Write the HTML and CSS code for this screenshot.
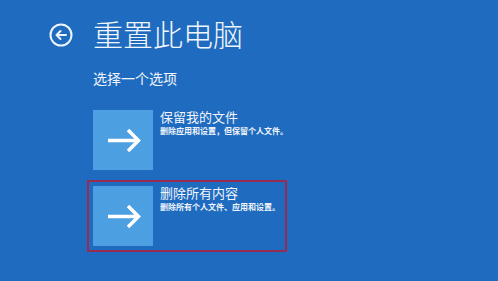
FILE: index.html
```html
<!DOCTYPE html>
<html lang="zh">
<head>
<meta charset="utf-8">
<link rel="stylesheet" href="styles.css">
</head>
<body>
<div class="page">
  <div class="header">
    <svg class="back" width="24" height="24" viewBox="0 0 24 24">
      <circle cx="12" cy="12" r="10.5" fill="none" stroke="#eef4fb" stroke-width="2"/>
      <path d="M17 12H7.5M11.5 8L7.5 12L11.5 16" fill="none" stroke="#eef4fb" stroke-width="2" stroke-linecap="round" stroke-linejoin="round"/>
    </svg>
    <h1 class="title">重置此电脑</h1>
  </div>
  <div class="content">
    <p class="prompt">选择一个选项</p>
    <div class="options">
      <div class="option">
        <div class="tile">
          <svg width="60" height="60" viewBox="0 0 60 60">
            <path d="M15 30.5H45M35 20L45.5 30.5L35 41" fill="none" stroke="#ffffff" stroke-width="3.5" stroke-linejoin="miter"/>
          </svg>
        </div>
        <div class="text">
          <div class="opt-title">保留我的文件</div>
          <div class="opt-desc">删除应用和设置，但保留个人文件。</div>
        </div>
      </div>
      <div class="option selected">
        <div class="tile">
          <svg width="60" height="60" viewBox="0 0 60 60">
            <path d="M15 30.5H45M35 20L45.5 30.5L35 41" fill="none" stroke="#ffffff" stroke-width="3.5" stroke-linejoin="miter"/>
          </svg>
        </div>
        <div class="text">
          <div class="opt-title">删除所有内容</div>
          <div class="opt-desc">删除所有个人文件、应用和设置。</div>
        </div>
      </div>
    </div>
  </div>
</div>
</body>
</html>
```
FILE: styles.css
```css
html, body {
  margin: 0;
  padding: 0;
  width: 498px;
  height: 281px;
  overflow: hidden;
  background: #1f6bbf;
  font-family: "Noto Sans CJK SC", "Noto Sans", sans-serif;
  color: #f2f6fb;
}
.page {
  padding: 15px 0 0 49px;
}
.header {
  display: flex;
  align-items: center;
  gap: 20px;
}
.back {
  display: block;
  flex: none;
  margin-top: 3px;
}
.title {
  margin: 0;
  font-size: 30px;
  font-weight: 300;
  line-height: 36px;
  letter-spacing: 0;
}
.content {
  padding-left: 38px;
}
.prompt {
  margin: 18px 0 0 6px;
  font-size: 14px;
  line-height: 18px;
  font-weight: 400;
}
.options {
  display: flex;
  flex-direction: column;
  gap: 4px;
  margin-top: 17px;
}
.option {
  display: flex;
  align-items: flex-start;
  gap: 7px;
  width: 188px;
  padding: 4px;
  border: 2px solid transparent;
}
.option.selected {
  border-color: #962c50;
}
.tile {
  width: 60px;
  height: 60px;
  flex: none;
  background: #4c9fe0;
}
.tile svg {
  display: block;
}
.opt-title {
  font-size: 13px;
  line-height: 16px;
  margin-top: -1px;
}
.opt-desc {
  font-size: 8px;
  line-height: 10px;
  margin-top: 1px;
  font-weight: 700;
  white-space: nowrap;
}
```
